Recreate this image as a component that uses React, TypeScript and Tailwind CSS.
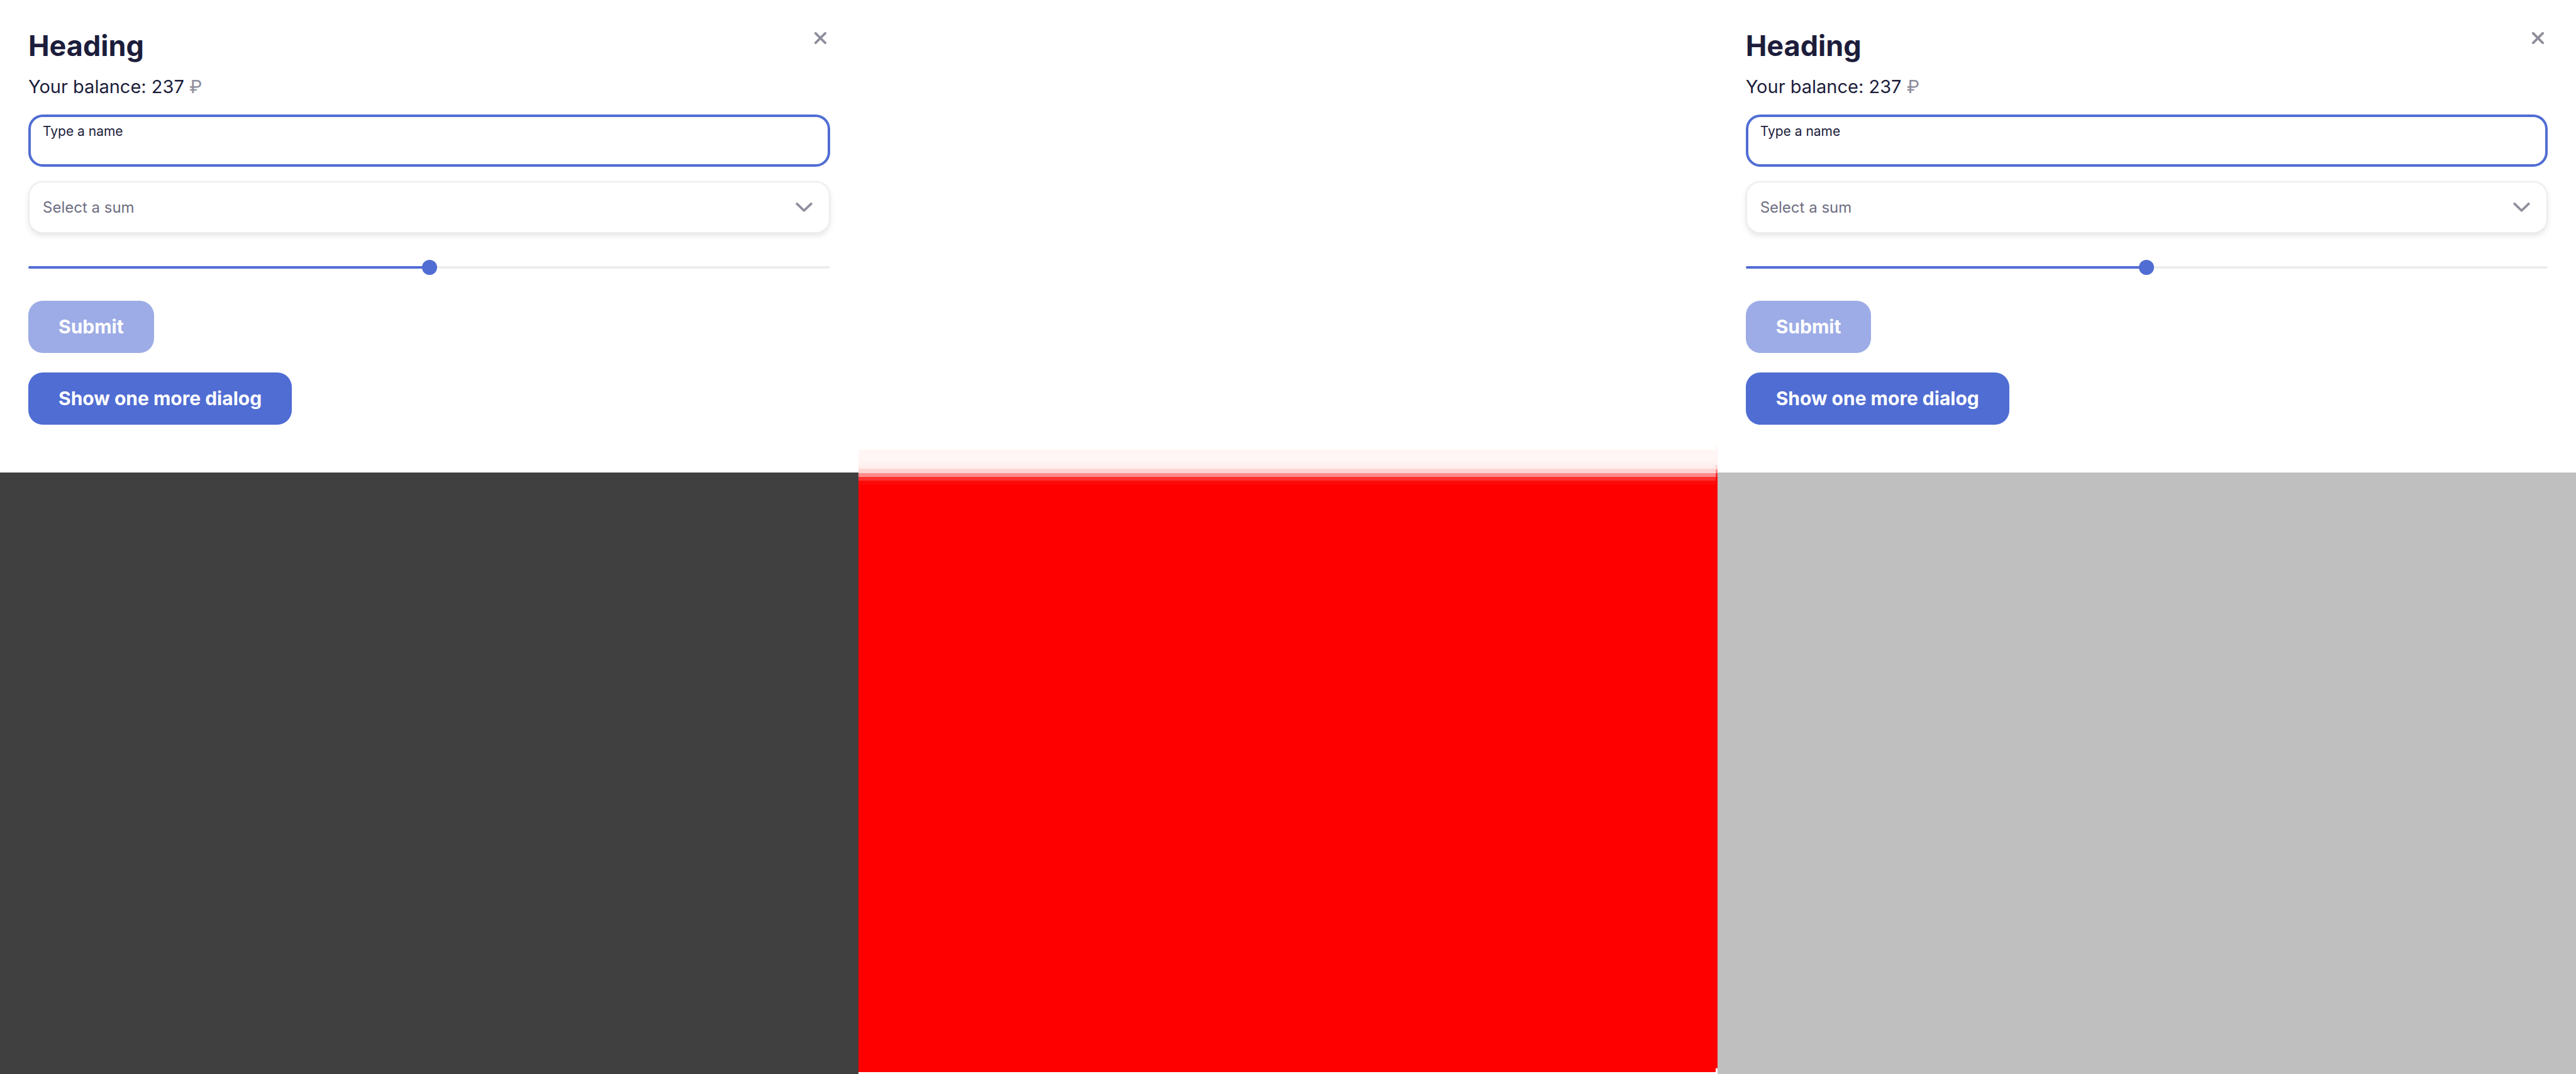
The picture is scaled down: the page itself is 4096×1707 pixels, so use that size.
import { useId } from "react";

function CloseIcon() {
  return (
    <svg viewBox="0 0 20 20" className="size-[19px]" fill="none" stroke="currentColor" strokeWidth="4" strokeLinecap="round" aria-hidden="true">
      <path d="M2 2 18 18M18 2 2 18" />
    </svg>
  );
}

function ChevronIcon() {
  return (
    <svg viewBox="0 0 28 16" className="h-[15px] w-[27px]" fill="none" stroke="currentColor" strokeWidth="4" strokeLinecap="round" strokeLinejoin="round" aria-hidden="true">
      <path d="M2 2 14 13.6 26 2" />
    </svg>
  );
}

function Dialog() {
  const nameId = useId();
  return (
    <section role="dialog" aria-label="Heading" className="relative bg-white px-[45px] pt-11 pb-[76px] text-[#1c1d3b]">
      <button type="button" aria-label="Close" className="absolute top-[51px] right-[51px] text-[#8e8e9c]">
        <CloseIcon />
      </button>
      <h1 className="text-[45px] leading-[58px] font-bold">Heading</h1>
      <p className="mt-4 mb-6 text-[29px] leading-[40px]">
        Your balance: 237 <span className="text-[#8e8e9c]">₽</span>
      </p>
      <div className="flex h-[83px] flex-col rounded-[23px] border-4 border-[#506dd3] px-[19px] pt-[9px]">
        <label htmlFor={nameId} className="text-[21px] leading-[28px]">Type a name</label>
        <input id={nameId} type="text" className="min-h-0 w-full flex-1 bg-transparent text-[24px] outline-none" />
      </div>
      <div className="relative mt-[23px] flex items-center">
        <select aria-label="Select a sum" defaultValue="" className="h-[83px] w-full appearance-none rounded-[23px] border-2 border-[#ededed] bg-white px-[21px] text-[24px] text-[#6e6e82] shadow-[0_4px_8px_rgba(0,0,0,0.1)] outline-none">
          <option value="">Select a sum</option>
        </select>
        <span className="pointer-events-none absolute right-7 text-[#8e8e9c]">
          <ChevronIcon />
        </span>
      </div>
      <input
        type="range"
        aria-label="Sum"
        min={0}
        max={100}
        defaultValue={50}
        className="mt-[42px] block h-6 w-full appearance-none bg-transparent [&::-webkit-slider-runnable-track]:h-1 [&::-webkit-slider-runnable-track]:rounded-full [&::-webkit-slider-runnable-track]:bg-[linear-gradient(to_right,#506dd3_50%,#ededed_50%)] [&::-webkit-slider-thumb]:mt-[-10px] [&::-webkit-slider-thumb]:size-6 [&::-webkit-slider-thumb]:appearance-none [&::-webkit-slider-thumb]:rounded-full [&::-webkit-slider-thumb]:bg-[#506dd3]"
      />
      <div className="mt-[41px] flex flex-col items-start gap-[31px] text-[30px] font-bold text-white">
        <button type="button" disabled className="h-[83px] rounded-[23px] bg-[#9dace6] px-12">Submit</button>
        <button type="button" className="h-[83px] rounded-[23px] bg-[#506dd3] px-12">Show one more dialog</button>
      </div>
    </section>
  );
}

function FadeRows({ className }: { className: string }) {
  return (
    <div className={className}>
      <div className="h-[7px] bg-[#fffffd]" />
      <div className="h-[18px] bg-[#fff6f5]" />
      <div className="h-[6px] bg-[#fff3f1]" />
      <div className="h-[6px] bg-[#ffeeed]" />
      <div className="h-[7px] bg-[#fdd5d3]" />
      <div className="h-[6px] bg-[#ff8a8a]" />
      <div className="h-[6px] bg-[#ff3030]" />
      <div className="h-[6px] bg-[#ff0a0a]" />
      <div className="flex-1 bg-[#ff0000]" />
    </div>
  );
}

export default function App() {
  return (
    <main className="grid min-h-screen grid-cols-3 bg-white font-['Inter',sans-serif]">
      <div className="flex flex-col bg-[#404040]">
        <Dialog />
      </div>
      <div className="flex bg-white">
        <FadeRows className="flex flex-1 flex-col pt-[708px] pb-[3px]" />
        <FadeRows className="flex w-[3px] flex-col pt-[702px] pb-[9px]" />
      </div>
      <div className="flex flex-col bg-[#bfbfbf]">
        <Dialog />
      </div>
    </main>
  );
}
